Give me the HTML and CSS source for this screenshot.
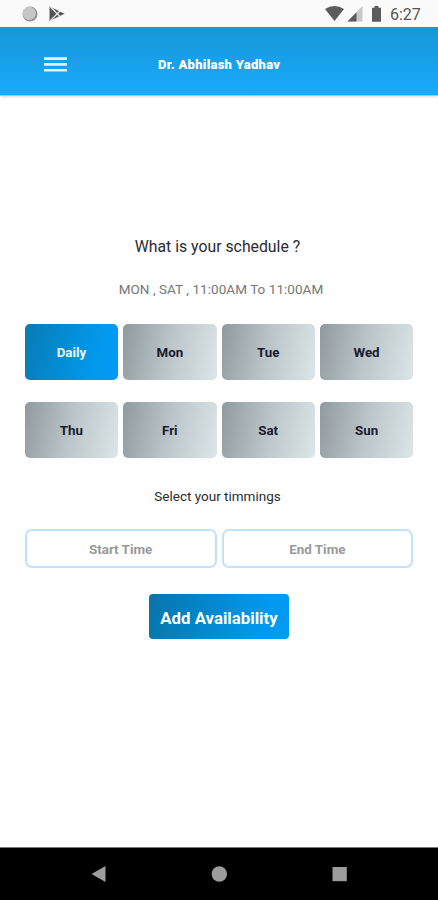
FILE: index.html
```html
<!DOCTYPE html>
<html lang="en">
<head>
<meta charset="utf-8">
<title>Schedule</title>
<link rel="stylesheet" href="styles.css">
</head>
<body>
<div class="screen">
  <div class="status">
    <svg class="status-left" width="50" height="27" viewBox="0 0 50 27">
      <circle cx="10" cy="14" r="7.500" fill="#909090"/>
      <circle cx="9.300" cy="13.300" r="6.600" fill="#c6c6c6"/>
      <path d="M29.500 6.500 44.500 13.800 29.500 21Z" fill="#555"/>
      <path d="M30.500 7 40.500 17M30.500 20.500 40.500 10.500" stroke="#f3f3f3" stroke-width="1.1"/>
    </svg>
    <div class="status-right">
      <svg width="58" height="27" viewBox="0 0 58 27" fill="#5c5c5c">
        <path d="M0 9Q9.500 2.800 19 9L9.500 21Z"/>
        <path d="M37.500 6V21.500H22.500Z" fill="#c8c8c8"/>
        <path d="M31.500 12.200V21.500H22.500Z"/>
        <path d="M49.500 6H53.500V7.800H56V21.800H47V7.800H49.500Z"/>
      </svg>
      <span class="clock">6:27</span>
    </div>
  </div>
  <header class="appbar">
    <svg class="menu" width="23" height="15" viewBox="0 0 23 15">
      <path d="M0 1.600H23M0 7.400H23M0 13.200H23" stroke="#dff2fd" stroke-width="2.600"/>
    </svg>
    <h1 class="name">Dr. Abhilash Yadhav</h1>
  </header>
  <main class="content">
    <h2 class="question">What is your schedule ?</h2>
    <p class="summary">MON , SAT , 11:00AM To 11:00AM</p>
    <div class="days">
      <button class="day selected">Daily</button>
      <button class="day">Mon</button>
      <button class="day">Tue</button>
      <button class="day">Wed</button>
      <button class="day">Thu</button>
      <button class="day">Fri</button>
      <button class="day">Sat</button>
      <button class="day">Sun</button>
    </div>
    <p class="prompt">Select your timmings</p>
    <div class="times">
      <button class="time">Start Time</button>
      <button class="time">End Time</button>
    </div>
    <button class="add">Add Availability</button>
  </main>
  <nav class="navbar">
    <svg width="438" height="52" viewBox="0 0 438 52" fill="#9c9c9c">
      <path d="M91.500 26 105.500 18V34Z"/>
      <circle cx="219.300" cy="26" r="7.700"/>
      <path d="M332.500 19H346.800V33.200H332.500Z"/>
    </svg>
  </nav>
</div>
</body>
</html>
```
FILE: styles.css
```css
* { box-sizing: border-box; }
body { margin: 0; font-family: Roboto, sans-serif; background: #fefefe; }
h1, h2, p { margin: 0; }
button { font: inherit; border: 0; padding: 0; }
svg { display: block; }

.screen { width: 438px; height: 900px; display: flex; flex-direction: column; overflow: hidden; }

.status { height: 27px; flex: none; background: #fafafa; display: flex; justify-content: space-between; padding: 0 17px 0 20px; }
.status-right { display: flex; gap: 7px; }
.clock { width: 31px; font-size: 16px; line-height: 29px; color: #555; white-space: nowrap; }

.appbar {
  height: 69px; flex: none; display: grid; grid-template-columns: 114px 1fr; align-items: center;
  padding: 6px 0 0 44px; background: linear-gradient(#1797d7, #18aafd);
  border-bottom: 1px solid #8ccdf3; box-shadow: 0 1px 2px #0002;
}
.name { padding-top: 2px; color: #fff; font-size: 13px; letter-spacing: 0.27px; line-height: 16px; font-weight: 900; white-space: nowrap; }

.content { flex: 1; display: flex; flex-direction: column; align-items: center; padding: 141px 25px 0; }
.question { padding-right: 3px; font-size: 15.800px; line-height: 20px; font-weight: 400; color: #2b2b30; }
.summary { margin-top: 23px; padding-left: 4px; font-size: 13.500px; letter-spacing: 0.05px; line-height: 18px; color: #777; }
.days { width: 388.500px; margin-top: 26px; display: grid; grid-template-columns: repeat(4, 1fr); gap: 22px 5px; }
.day {
  height: 56px; border-radius: 5px; font-size: 13.300px; font-weight: 700; color: #181a31;
  background: linear-gradient(102deg, #8e9a9e, #bcc6ca 50%, #dce5e7);
}
.day.selected { color: #e9f6ff; background: linear-gradient(105deg, #087bb4, #0299ee 75%, #029bf3); }
.prompt { margin-top: 29px; padding-right: 3px; font-size: 13.500px; line-height: 18px; color: #2b2b30; }
.times { width: 388.500px; margin-top: 24px; display: grid; grid-template-columns: 1fr 1fr; gap: 5px; }
.time { height: 39px; padding-top: 2px; border: 2px solid #c2e1fd; border-radius: 7px; background: #fff; color: #999; font-size: 13.400px; font-weight: 700; }
.add {
  width: 140px; height: 45px; margin-top: 26px; padding-top: 2px; border-radius: 4px; color: #fff; font-size: 16.800px; font-weight: 700;
  background: linear-gradient(105deg, #0874aa, #0299ee 80%, #029bf3);
}

.navbar { height: 53px; flex: none; background: #000; border-top: 1px solid #777; }
```
